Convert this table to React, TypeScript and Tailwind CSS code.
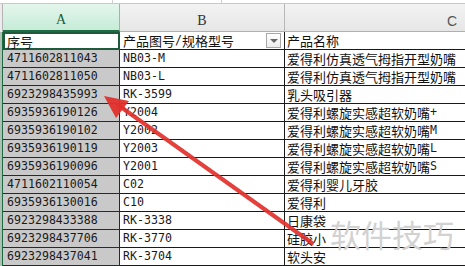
import React from "react";

const rows: [string, string, string][] = [
  ["4711602811043", "NB03-M", "爱得利仿真透气拇指开型奶嘴"],
  ["4711602811050", "NB03-L", "爱得利仿真透气拇指开型奶嘴"],
  ["6923298435993", "RK-3599", "乳头吸引器"],
  ["6935936190126", "Y2004", "爱得利螺旋实感超软奶嘴+"],
  ["6935936190102", "Y2002", "爱得利螺旋实感超软奶嘴M"],
  ["6935936190119", "Y2003", "爱得利螺旋实感超软奶嘴L"],
  ["6935936190096", "Y2001", "爱得利螺旋实感超软奶嘴S"],
  ["4711602110054", "C02", "爱得利婴儿牙胶"],
  ["6935936130016", "C10", "爱得利"],
  ["6923298433388", "RK-3338", "日康袋"],
  ["6923298437706", "RK-3770", "硅胶小"],
  ["6923298437041", "RK-3704", "软头安"],
];

// split text into latin / cjk runs so each gets its own font size
function Mixed({ text }: { text: string }) {
  const parts = text.match(/[\u3000-\u9fff]+|[^\u3000-\u9fff]+/g) || [];
  return (
    <>
      {parts.map((p, i) =>
        /[\u3000-\u9fff]/.test(p) ? (
          <span key={i} className="font-['Noto_Sans_CJK_SC',sans-serif] text-[13px]">
            {p}
          </span>
        ) : (
          <span key={i} className="font-['DejaVu_Sans_Mono',monospace] text-[11.6px] text-[#1a1a1a]">
            {p}
          </span>
        )
      )}
    </>
  );
}

export default function App() {
  return (
    <div className="relative w-[465px] h-[266px] overflow-hidden bg-white text-[#111] leading-none">
      {/* formula bar remnant */}
      <div className="h-[4px] flex bg-white border-b border-[#c8c8c8]">
        <div className="w-[113px] border-r border-[#d0d0d0]" />
        <div className="w-[109px] border-r border-[#d0d0d0]" />
        <div className="flex-1" />
      </div>

      {/* column headers */}
      <div className="grid grid-cols-[3px_117px_165px_1fr] h-[28px]">
        <div className="bg-[#ececec] border-r border-[#b5b5b5]" />
        <div className="bg-gradient-to-b from-[#e4f6ec] to-[#c6ecd7] border-r border-[#9fb5a8] border-b-2 border-b-[#1f6b43] flex items-end justify-center pb-[3px]">
          <span className="font-['Liberation_Serif',serif] text-[14px] text-[#1f5a38]">A</span>
        </div>
        <div className="bg-gradient-to-b from-[#f3f3f3] to-[#e6e6e6] border-r border-[#b8b8b8] border-b border-b-[#b0b0b0] flex items-end justify-center pb-[3px]">
          <span className="font-['Liberation_Serif',serif] text-[14px] text-[#333]">B</span>
        </div>
        <div className="bg-gradient-to-b from-[#f3f3f3] to-[#e6e6e6] border-b border-b-[#b0b0b0] flex items-end justify-end pr-[8px] pb-[3px]">
          <span className="font-['Liberation_Sans',sans-serif] text-[14px] text-[#555]">C</span>
        </div>
      </div>

      {/* first row: headers of the sheet */}
      <div className="grid grid-cols-[3px_117px_165px_1fr] h-[18px]">
        <div className="bg-[#aebfb4] border-r border-[#1f6b43]" />
        <div className="bg-white shadow-[inset_0_0_0_2px_#1f5a3c] flex items-center pl-[4px]">
          <Mixed text="序号" />
        </div>
        <div className="border-r border-b border-[#1a1a1a] flex items-center pl-[3px] relative">
          <Mixed text="产品图号/规格型号" />
          <div className="absolute right-[3px] top-[1px] w-[15px] h-[15px] border border-[#a8a8a8] bg-gradient-to-b from-white to-[#ececec] flex items-center justify-center">
            <div className="w-0 h-0 border-l-[4px] border-r-[4px] border-t-[4px] border-l-transparent border-r-transparent border-t-[#666]" />
          </div>
        </div>
        <div className="border-b border-[#1a1a1a] flex items-center pl-[2px]">
          <Mixed text="产品名称" />
        </div>
      </div>

      {rows.map(([a, b, c]) => (
        <div key={a} className="grid grid-cols-[3px_117px_165px_1fr] h-[18px]">
          <div className="bg-[#aebfb4] border-r border-[#1f6b43]" />
          <div className="bg-[#c9c9c9] border-r border-b border-[#2a2a2a] flex items-center pl-[4px]">
            <Mixed text={a} />
          </div>
          <div className="border-r border-b border-[#1a1a1a] flex items-center pl-[3px]">
            <Mixed text={b} />
          </div>
          <div className="border-b border-[#1a1a1a] flex items-center pl-[2px] whitespace-nowrap overflow-hidden">
            <Mixed text={c} />
          </div>
        </div>
      ))}

      {/* watermark */}
      <div className="absolute left-[330px] top-[218px] font-['Noto_Sans_CJK_SC',sans-serif] text-[31px] text-[#d2d2d2] leading-none">
        软件技巧
      </div>

      {/* red arrow annotation */}
      <svg className="absolute inset-0 pointer-events-none" width="465" height="266">
        <line x1="312" y1="243" x2="118" y2="105" stroke="#e2302c" strokeWidth="4" strokeLinecap="round" opacity="0.92" />
        <polygon points="104,96 116,118 129,101" fill="#e2302c" opacity="0.95" />
      </svg>
    </div>
  );
}
